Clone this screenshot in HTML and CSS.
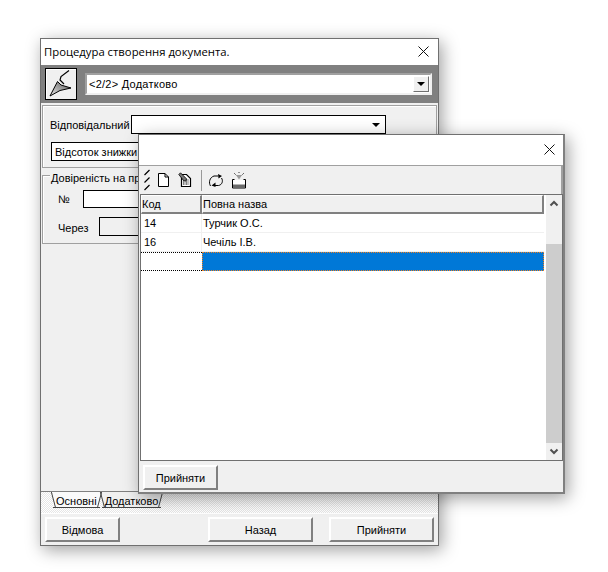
FILE: index.html
```html
<!DOCTYPE html>
<html lang="uk">
<head>
<meta charset="utf-8">
<title>Процедура створення документа</title>
<link rel="stylesheet" href="styles.css">
</head>
<body>
<div class="window main-window">
  <div class="titlebar main-title">
    <span class="title-text">Процедура створення документа.</span>
    <svg class="close" viewBox="0 0 11 11"><path d="M.5.5l10 10M10.500.5l-10 10" stroke="#111" fill="none"/></svg>
  </div>
  <div class="step-band">
    <div class="step-icon">
      <svg width="30" height="30" viewBox="0 0 30 30">
        <defs><linearGradient id="tr" x1="0" y1="1" x2="1" y2="0"><stop offset="0" stop-color="#e8e8e8"/><stop offset=".55" stop-color="#999"/><stop offset="1" stop-color="#505050"/></linearGradient></defs>
        <path d="M23 1.500L15 7.500l-1 3.500 4 4" fill="none" stroke="#000" stroke-width="1.200"/>
        <path d="M4 27L11.500 12.500l3.500 3.500 10 3-11 2.500z" fill="url(#tr)" stroke="#000"/>
      </svg>
    </div>
    <div class="step-combo">
      <span class="step-value">&lt;2/2&gt; Додатково</span>
      <span class="combo-btn"><i class="arrow"></i></span>
    </div>
  </div>
  <div class="main-body">
    <div class="panel">
      <div class="panel-row">
        <span class="resp-label">Відповідальний</span>
        <div class="field resp-field"><i class="arrow"></i></div>
      </div>
      <div class="field discount-field">Відсоток знижки</div>
    </div>
    <div class="group">
      <span class="group-legend">Довіреність на пред'явника</span>
      <div class="group-row no-row"><span class="no-label">№</span><div class="field no-field"></div></div>
      <div class="group-row via-row"><span class="via-label">Через</span><div class="field via-field"></div></div>
    </div>
    <div class="spacer"></div>
    <div class="tabstrip">
      <span class="tab tab-active">Основні</span>
      <span class="tab">Додатково</span>
    </div>
    <div class="main-actions">
      <span class="btn btn-cancel">Відмова</span>
      <span class="btn btn-back">Назад</span>
      <span class="btn btn-accept">Прийняти</span>
    </div>
  </div>
</div>

<div class="window lookup-window">
  <div class="titlebar lookup-title">
    <svg class="close" viewBox="0 0 11 11"><path d="M.5.5l10 10M10.500.5l-10 10" stroke="#111" fill="none"/></svg>
  </div>
  <div class="toolbar">
    <svg class="grip" width="8" height="22" viewBox="0 0 8 22"><path d="M6.500 1L1.500 6M6.500 8.500L1.500 13.500M6.500 16L1.500 21" stroke="#000" stroke-width="1.200" fill="none"/></svg>
    <svg class="tool tool-new" width="13" height="16" viewBox="0 0 13 16"><path d="M1.500 1.500h6.500l3.500 3.500v9.500h-10z" fill="#fff" stroke="#000"/><path d="M8 1.500v3.500h3.500" fill="none" stroke="#000"/></svg>
    <svg class="tool tool-edit" width="14" height="16" viewBox="0 0 14 16"><path d="M3.500 2.500h5l4 4v8h-9z" fill="#fff" stroke="#000" stroke-width="1.200"/><path d="M5 8h6M5 10h6M5 12h6" stroke="#000" stroke-dasharray="1 .5"/><path d="M.8 2.500L2.500.8l6 6-.8 2.300-2.200-.6z" fill="#777" stroke="#000" stroke-width=".8"/></svg>
    <span class="tool-sep"></span>
    <svg class="tool tool-refresh" width="16" height="15" viewBox="0 0 16 15"><path d="M2.500 13C.5 9.500 1.500 4.500 6 3h4" fill="none" stroke="#000"/><path d="M10 1l4 2-3.500 2.500z" fill="#000"/><path d="M13.500 5C15.500 8 14 12 10.500 12.500H7" fill="none" stroke="#000"/><path d="M7.500 9.500l-4 3 4 1.500z" fill="#000"/></svg>
    <svg class="tool tool-import" width="16" height="17" viewBox="0 0 16 17"><path d="M3 1l3 3M13 1l-3 3M8 0v2" stroke="#333" stroke-dasharray="1 1"/><path d="M5 3h6l-3 4.500z" fill="#999"/><path d="M1.500 7.500h2M12.500 7.500h2M1.500 7.500v8.500h13v-8.500" fill="none" stroke="#000"/><path d="M2 8h12v4H2z" fill="#fff"/><path d="M2 12h12v4H2z" fill="#6a6a6a"/><path d="M2 12h12v1H2z" fill="#b5b5b5"/></svg>
  </div>
  <div class="grid">
    <div class="grid-main">
      <div class="row head"><div class="cell code head-cell">Код</div><div class="cell name head-cell">Повна назва</div></div>
      <div class="row"><div class="cell code">14</div><div class="cell name">Турчик О.С.</div></div>
      <div class="row"><div class="cell code">16</div><div class="cell name">Чечіль І.В.</div></div>
      <div class="row row-new"><div class="cell code cell-focus"></div><div class="cell name cell-selected"></div></div>
    </div>
    <div class="scrollbar">
      <svg class="sb-arrow" width="16" height="17" viewBox="0 0 16 17"><path d="M4.500 10.500L8 7l3.500 3.500" fill="none" stroke="#505050" stroke-width="2"/></svg>
      <div class="sb-space"></div>
      <div class="sb-thumb"></div>
      <svg class="sb-arrow" width="16" height="17" viewBox="0 0 16 17"><path d="M4.500 6.500L8 10l3.500-3.500" fill="none" stroke="#505050" stroke-width="2"/></svg>
    </div>
  </div>
  <div class="lookup-actions"><span class="btn btn-ok">Прийняти</span></div>
</div>
</body>
</html>
```
FILE: styles.css
```css
* { box-sizing: border-box; }
html, body { margin: 0; padding: 0; }
body {
  width: 608px;
  height: 572px;
  position: relative;
  overflow: hidden;
  background: #fff;
  font-family: "Liberation Sans", Arial, sans-serif;
  font-size: 11px;
  color: #000;
}
.window {
  position: absolute;
  display: flex;
  flex-direction: column;
  background: #f0f0f0;
  border: 1px solid #707070;
  box-shadow: 3px 4px 16px rgba(0,0,0,.38);
}
.main-window { left: 40px; top: 38px; width: 399px; height: 508px; }
.lookup-window {
  left: 138px; top: 134px; width: 427px; height: 360px;
  border-right: 2px solid #808080;
  border-bottom: 2px solid #808080;
}
.titlebar {
  display: flex;
  align-items: center;
  background: #fff;
  flex: none;
  position: relative;
}
.main-title { height: 26px; padding: 0 0 2px 3px; }
.title-text { font-family: "Open Sans", sans-serif; font-size: 11.300px; }
.lookup-title { height: 31px; border-bottom: 1px solid #a0a0a0; }
.close { width: 11px; height: 11px; position: absolute; right: 9px; top: 7px; }
.lookup-title .close { top: 9px; right: 8px; }

.step-band {
  height: 38px;
  flex: none;
  background: #808080;
  display: flex;
  align-items: center;
  padding-left: 4px;
}
.step-icon {
  width: 32px; height: 32px;
  background: #f0f0f0;
  border: 1px solid #000;
  box-shadow: inset 1px 1px 0 #fff;
  display: flex;
}
.step-combo {
  margin-left: 8px;
  width: 347px;
  height: 22px;
  display: flex;
  align-items: center;
  justify-content: space-between;
  background: #fff;
  border: 2px solid;
  border-color: #a0a0a0 #f0f0f0 #f0f0f0 #a0a0a0;
  padding: 0 1px 0 2px;
}
.step-value { letter-spacing: .25px; margin-top: -1px; }
.combo-btn {
  width: 16px; height: 16px;
  background: #f0f0f0;
  border: 1px solid;
  border-color: #fff #707070 #707070 #fff;
  display: flex;
  align-items: center;
  justify-content: center;
}
.arrow {
  display: block;
  width: 0; height: 0;
  border-left: 4px solid transparent;
  border-right: 4px solid transparent;
  border-top: 4px solid #000;
}

.main-body { flex: 1; display: flex; flex-direction: column; min-height: 0; }
.panel {
  margin: 2px 1px 0;
  height: 63px;
  border: 1px solid #a0a0a0;
  box-shadow: inset 1px 1px 0 #fff;
  padding: 9px 0 0 7px;
}
.panel-row { display: flex; align-items: center; height: 19px; }
.resp-label { width: 81px; }
.field {
  background: #fff;
  border: 1px solid #000;
  height: 19px;
}
.resp-field {
  width: 255px;
  display: flex;
  align-items: center;
  justify-content: flex-end;
  padding-right: 5px;
}
.discount-field {
  width: 334px;
  margin: 8px 0 0 1px;
  display: flex;
  align-items: center;
  padding-left: 3px;
}
.group {
  margin: 7px 1px 0;
  height: 69px;
  border: 1px solid #a0a0a0;
  box-shadow: inset 1px 1px 0 #fff;
  position: relative;
}
.group-legend {
  position: absolute;
  left: 7px;
  top: -5px;
  background: #f0f0f0;
  padding: 0 2px 0 1px;
  line-height: 14px;
  white-space: nowrap;
}
.group-row { display: flex; align-items: center; padding-left: 15px; }
.no-row { margin-top: 14px; }
.via-row { margin-top: 9px; }
.no-label { width: 25px; }
.via-label { width: 41px; padding-top: 2px; }
.no-field { width: 180px; height: 18px; }
.via-field { width: 180px; background: #f0f0f0; }

.spacer { flex: 1; border-bottom: 1px solid #808080; }
.tabstrip {
  height: 21px;
  flex: none;
  padding-left: 12px;
  display: flex;
  background: repeating-conic-gradient(#fff 0 25%, #e6e6e6 0 50%) 0 0 / 2px 2px;
  align-items: flex-start;
}
.tab {
  height: 16px;
  line-height: 18px;
  padding: 0 3px;
  margin-right: 2px;
  background: #f0f0f0;
  position: relative;
  border-bottom: 1px solid #444;
}
.tab::before, .tab::after {
  content: "";
  position: absolute;
  top: 0; bottom: -1px;
  width: 1px;
  background: #444;
}
.tab::before { left: 0; transform: skewX(15deg); }
.tab::after { right: 0; transform: skewX(-15deg); }
.tab-active { background: #fafafa; }
.main-actions {
  height: 32px;
  flex: none;
  padding: 3px 4px 0;
  display: flex;
  border-top: 1px solid #fff;
}
.btn {
  height: 25px;
  display: flex;
  align-items: center;
  justify-content: center;
  background: #f0f0f0;
  border: 2px solid;
  border-color: #fff #808080 #808080 #fff;
}
.btn-cancel { width: 75px; }
.btn-back { width: 105px; margin-left: 88px; }
.btn-accept { width: 105px; margin-left: 16px; }

.toolbar {
  height: 28px;
  flex: none;
  display: flex;
  align-items: center;
  padding-left: 4px;
  border-right: 2px solid #a0a0a0;
}
.tool { display: block; }
.tool-new { margin-left: 6px; }
.tool-edit { margin-left: 8px; }
.tool-sep { width: 1px; height: 21px; background: #999; margin: 0 6px 0 9px; }
.tool-import { margin-left: 7px; }

.grid {
  margin-left: 1px;
  height: 267px;
  flex: none;
  display: flex;
  width: 423px;
  background: #fff;
  border: 1px solid #707070;
}
.grid-main { width: 403px; flex: none; }
.row { display: flex; height: 19px; border-bottom: 1px solid #f0f0f0; }
.head { height: 19px; border-bottom: 0; }
.cell { display: flex; align-items: center; white-space: nowrap; }
.code { width: 61px; padding-left: 3px; border-right: 1px solid #f0f0f0; flex: none; }
.name { flex: 1; padding-left: 1px; }
.head-cell {
  background: #f0f0f0;
  padding-left: 0;
  border-bottom: 2px solid #808080;
  border-right: 2px solid #808080;
  border-top: 1px solid #fff;
  border-left: 1px solid #fff;
}
.row-new { border-bottom: 0; height: 19px; }
.cell-focus { border: 1px dotted #000; border-left: 0; border-right: 0; }
.cell-selected { background: #0078d7; border: 1px dotted #f08020; }
.scrollbar {
  width: 16px;
  margin-left: 2px;
  background: #f0f0f0;
  display: flex;
  flex-direction: column;
  flex: none;
}
.sb-arrow { display: block; flex: none; }
.sb-space { height: 32px; flex: none; }
.sb-thumb { flex: 1; background: #cdcdcd; }
.lookup-actions { flex: 1; padding: 4px 0 0 4px; }
.btn-ok { width: 75px; }
```
